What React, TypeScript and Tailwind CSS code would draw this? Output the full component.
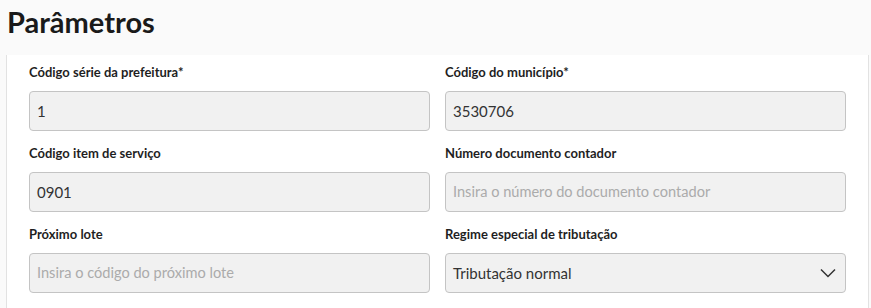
import React from "react";

const font = { fontFamily: "Lato, 'Noto Sans', sans-serif" };

function Field({ label, value, placeholder, select }: { label: string; value?: string; placeholder?: string; select?: boolean }) {
  return (
    <div className="flex flex-col">
      <div className="h-[18px] leading-[18px] text-[13px] font-bold text-[#1f1f1f] mb-[10px]">{label}</div>
      <div className="h-[40px] rounded-[4px] border border-[#c4c4c4] bg-[#f1f1f1] flex items-center px-[7px] justify-between">
        <span className={value ? "text-[15px] text-[#333333]" : "text-[14.6px] text-[#ababab]"}>{value ?? placeholder}</span>
        {select && (
          <svg width="18" height="18" viewBox="0 0 18 18" className="mr-[1px]">
            <polyline points="2,5.5 9,12.5 16,5.5" fill="none" stroke="#333" strokeWidth="1.5" />
          </svg>
        )}
      </div>
    </div>
  );
}

export default function App() {
  return (
    <div className="w-[871px] h-[308px] overflow-hidden bg-[#fafafa]" style={font}>
      <div className="h-[55px] px-[7px] pt-[2px]">
        <h1 className="text-[29px] font-bold text-[#1a1a1a] leading-[40px]">Parâmetros</h1>
      </div>
      <div className="ml-[6px] mr-[2px] bg-white border-l border-r border-[#e2e2e2] h-[260px] pt-[8px] px-[22px]">
        <div className="grid grid-cols-2 gap-x-[15px] gap-y-[13px]">
          <Field label="Código série da prefeitura*" value="1" />
          <Field label="Código do município*" value="3530706" />
          <Field label="Código item de serviço" value="0901" />
          <Field label="Número documento contador" placeholder="Insira o número do documento contador" />
          <Field label="Próximo lote" placeholder="Insira o código do próximo lote" />
          <Field label="Regime especial de tributação" value="Tributação normal" select />
        </div>
      </div>
    </div>
  );
}
